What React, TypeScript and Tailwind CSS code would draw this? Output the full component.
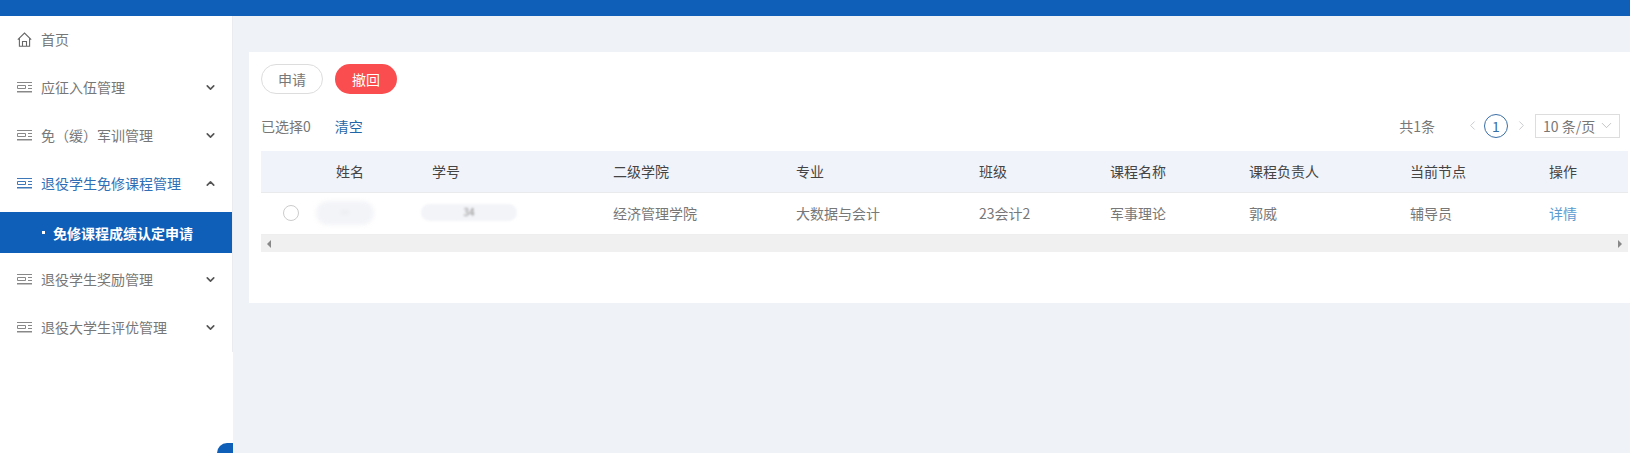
import { ChevronDown, ChevronLeft, ChevronRight, ChevronUp } from 'lucide-react';

const menus = [
  { label: '应征入伍管理' },
  { label: '免（缓）军训管理' },
  { label: '退役学生免修课程管理', open: true },
  { label: '退役学生奖励管理' },
  { label: '退役大学生评优管理' },
];

const columns = ['姓名', '学号', '二级学院', '专业', '班级', '课程名称', '课程负责人', '当前节点', '操作'];
const gridCols = 'grid grid-cols-[75px_96px_181px_183px_183px_131px_139px_161px_139px_1fr]';

const MenuIcon = ({ color }: { color: string }) => (
  <svg width="15" height="11" viewBox="0 0 15 11" fill="none" stroke={color} className="shrink-0">
    <path d="M0 .5h15M.5 3.500h8v3h-8zM11 3.500h4M11 6.500h4" strokeWidth="1" />
    <path d="M0 9.750h15" strokeWidth="1.500" />
  </svg>
);

const HomeIcon = () => (
  <svg width="15" height="15" viewBox="0 0 15 15" fill="none" stroke="#666" strokeWidth="1.100" className="shrink-0">
    <path d="M.8 7.600 7.500 1l6.700 6.600M2.400 6.400v7.800h10.200V6.400M5.500 14V9.500h4V14" />
  </svg>
);

const App = () => {
  return (
    <div className="h-[453px] w-[1630px] overflow-hidden bg-[#eff2f7] font-['Noto_Sans_CJK_SC',sans-serif] text-sm text-[#777]">
      <div className="h-4 bg-[#0f5fb8]" />
      <div className="flex h-[437px]">
        {/* Sidebar */}
        <aside className="relative w-[233px] shrink-0 bg-white">
          <div className="flex h-12 -translate-y-px items-center gap-[9px] pl-[17px]">
            <HomeIcon />
            <span>首页</span>
          </div>
          {menus.map((menu) => (
            <div key={menu.label}>
              <div className={`flex h-12 -translate-y-px items-center pl-[17px] pr-4 ${menu.open ? 'text-[#2f6fb5]' : ''}`}>
                <MenuIcon color={menu.open ? '#3f78b8' : '#888'} />
                <span className="ml-[9px] flex-1 whitespace-nowrap">{menu.label}</span>
                {menu.open ? (
                  <ChevronUp size={13} strokeWidth={3} className="text-[#555]" />
                ) : (
                  <ChevronDown size={13} strokeWidth={3} className="text-[#555]" />
                )}
              </div>
              {menu.open && (
                <div className="mb-[3px] mt-1 flex h-[41px] items-center bg-[#0f5fb8] pl-[42px] font-bold text-white">
                  <span className="mr-2 h-[3px] w-[3px] bg-white" />
                  <span>免修课程成绩认定申请</span>
                </div>
              )}
            </div>
          ))}
          <div className="absolute right-0 top-0 h-[336px] w-px bg-[#e9ebee]" />
          <div className="absolute bottom-0 right-0 h-[10px] w-4 rounded-tl-[10px] bg-[#0f5fb8]" />
        </aside>

        {/* Main */}
        <main className="min-w-0 flex-1 pl-4 pt-9">
          <section className="h-[251px] bg-white pl-3 pr-0.5 pt-3">
            <div className="flex gap-3">
              <button className="h-[30px] w-[62px] rounded-full border border-[#ddd] bg-white text-[#777]">申请</button>
              <button className="h-[30px] w-[62px] rounded-full bg-[#f94d4f] text-white">撤回</button>
            </div>

            <div className="mt-[18px] flex h-[27px] items-center">
              <span>已选择0</span>
              <span className="ml-6 text-[#1f66a8]">清空</span>
              <span className="ml-auto">共1条</span>
              <ChevronLeft size={15} strokeWidth={1.500} className="ml-[30px] text-[#c5c8ce]" />
              <span className="ml-1 flex h-6 w-6 items-center justify-center rounded-full border border-[#3a6ea5] text-[#3a6ea5]">1</span>
              <ChevronRight size={15} strokeWidth={1.500} className="ml-1.5 text-[#c5c8ce]" />
              <div className="ml-1.5 mr-2 flex h-6 w-[85px] items-center justify-between border border-[#ddd] pl-[7px] pr-1">
                <span className="whitespace-nowrap">10 条/页</span>
                <ChevronDown size={17} strokeWidth={1} className="text-[#aaa]" />
              </div>
            </div>

            {/* Table */}
            <div className="mt-3">
              <div className={`${gridCols} h-[42px] items-center border-b border-[#e8eaec] bg-[#f1f3fa] pb-0.5 text-[#444]`}>
                <span />
                {columns.map((col) => (
                  <span key={col}>{col}</span>
                ))}
              </div>
              <div className={`${gridCols} h-[42px] items-center border-b border-[#eee] bg-white pb-0.5`}>
                <span className="ml-[22px] h-4 w-4 rounded-full border border-[#ccc]" />
                <div className="relative h-full">
                  <div className="absolute left-[-20px] top-[8px] flex h-6 w-[58px] items-center justify-center rounded-full bg-[#f3f4f8] text-[8px] text-[#999] blur-[2px]">
                    <span>…</span>
                  </div>
                </div>
                <div className="relative h-full">
                  <div className="absolute left-[-11px] top-[11px] flex h-[17px] w-[96px] items-center justify-center rounded-full bg-[#f3f4f8] text-[10px] text-[#888] blur-[1px]">
                    <span>34</span>
                  </div>
                </div>
                <span>经济管理学院</span>
                <span>大数据与会计</span>
                <span>23会计2</span>
                <span>军事理论</span>
                <span>郭威</span>
                <span>辅导员</span>
                <span className="text-[#5a9bd0]">详情</span>
              </div>
              <div className="flex h-[17px] items-center justify-between bg-[#f0f0f0] px-1.5">
                <span className="h-0 w-0 border-y-4 border-r-4 border-y-transparent border-r-[#888]" />
                <span className="h-0 w-0 border-y-4 border-l-4 border-y-transparent border-l-[#888]" />
              </div>
            </div>
          </section>
        </main>
      </div>
    </div>
  );
};

export default App;
